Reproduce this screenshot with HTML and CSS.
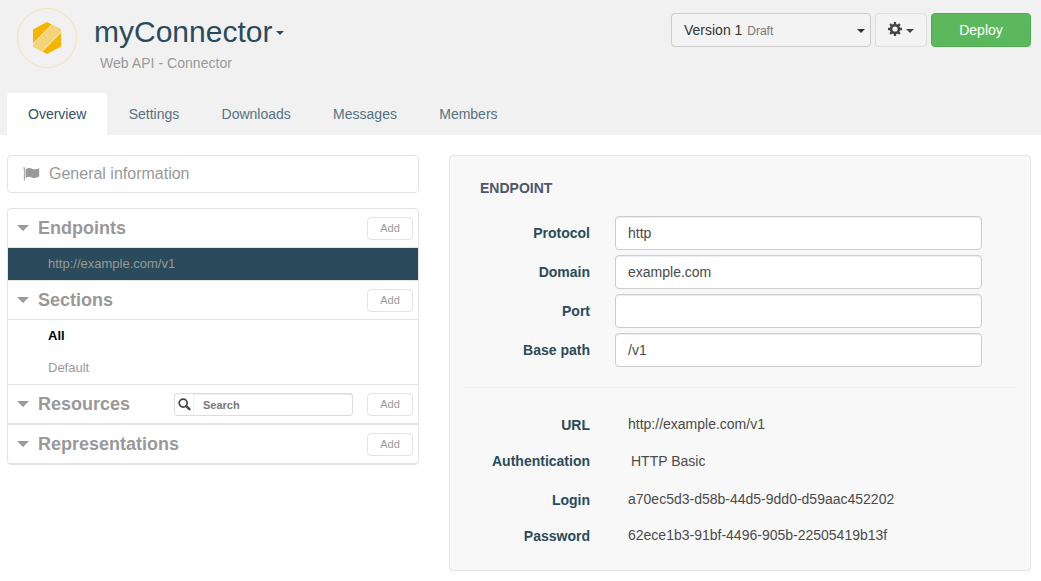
FILE: index.html
```html
<!DOCTYPE html>
<html lang="en">
<head>
<meta charset="utf-8">
<title>myConnector</title>
<link rel="stylesheet" href="styles.css">
</head>
<body>
<header class="header">
  <div class="topbar">
    <svg class="logo" width="60" height="60" viewBox="0 0 60 60">
      <circle cx="30" cy="30" r="29.5" fill="none" stroke="#f3e2b4"/>
      <path d="M30 14 44 21.500V38.500L30 46 16 38.500V21.500Z" fill="#f4b400"/>
      <path d="M35 16.700 44 21.500V24.300L25.200 43.400 16 38.500V36Z" fill="#f3d479"/>
      <path d="M35.300 16.300 15.800 36M44.200 24.200 25 43.600" stroke="#f8f0da" fill="none"/>
    </svg>
    <div class="identity">
      <h1 class="title">myConnector<span class="caret"></span></h1>
      <div class="subtitle">Web API - Connector</div>
    </div>
    <div class="actions">
      <button class="btn version"><span>Version 1 <small>Draft</small></span><span class="caret"></span></button>
      <button class="btn gear">
        <svg width="14" height="14" viewBox="0 0 14 14"><circle cx="7" cy="7" r="3.900" fill="none" stroke="#444" stroke-width="2.600"/><path stroke="#444" stroke-width="2.300" d="M7 0v2.500M7 11.500V14M0 7h2.500M11.500 7H14M2.100 2.100l1.700 1.700M10.200 10.200l1.700 1.700M2.100 11.900l1.700-1.700M10.200 3.800l1.700-1.700"/></svg>
        <span class="caret"></span>
      </button>
      <button class="btn deploy">Deploy</button>
    </div>
  </div>
  <nav class="tabs">
    <a class="tab active">Overview</a><a class="tab">Settings</a><a class="tab">Downloads</a><a class="tab">Messages</a><a class="tab">Members</a>
  </nav>
</header>
<main class="main">
  <aside class="sidebar">
    <div class="general">
      <svg width="17" height="14" viewBox="0 0 17 14" fill="#999"><path d="M.4.2h1.400v13.600H.9V2.100L.4 1.600z"/><path d="M2.600 2.500C5 .9 7 .7 9 1.700c2.100 1 4 .8 7.200-.5v8.400c-3 1.600-5.100 1.700-7.300.8-2.100-.9-4-.7-6.300.6z"/></svg>
      General information
    </div>
    <div class="tree">
      <div class="group"><i class="arrow"></i><h2>Endpoints</h2><button class="add">Add</button></div>
      <div class="item selected">http://example.com/v1</div>
      <div class="group follows"><i class="arrow"></i><h2>Sections</h2><button class="add">Add</button></div>
      <div class="item current">All</div>
      <div class="item">Default</div>
      <div class="group follows"><i class="arrow"></i><h2>Resources</h2>
        <div class="search">
          <span class="search-icon"><svg width="13" height="13" viewBox="0 0 13 13" fill="none" stroke="#444"><circle cx="5.200" cy="5.100" r="4" stroke-width="1.700"/><path d="M8.200 8.100l3.200 3.100" stroke-width="2.300" stroke-linecap="round"/></svg></span>
          <input type="text" placeholder="Search">
        </div>
        <button class="add">Add</button></div>
      <div class="group follows"><i class="arrow"></i><h2>Representations</h2><button class="add">Add</button></div>
    </div>
  </aside>
  <section class="panel">
    <h3 class="panel-title">ENDPOINT</h3>
    <div class="fields">
      <label>Protocol</label><input type="text" value="http">
      <label>Domain</label><input type="text" value="example.com">
      <label>Port</label><input type="text" value="">
      <label>Base path</label><input type="text" value="/v1">
    </div>
    <div class="divider"></div>
    <dl class="facts">
      <dt>URL</dt><dd>http://example.com/v1</dd>
      <dt class="auth-label">Authentication</dt><dd class="auth">HTTP Basic</dd>
      <dt>Login</dt><dd>a70ec5d3-d58b-44d5-9dd0-d59aac452202</dd>
      <dt>Password</dt><dd>62ece1b3-91bf-4496-905b-22505419b13f</dd>
    </dl>
  </section>
</main>
</body>
</html>
```

FILE: styles.css
```css
* { box-sizing: border-box; }
body {
  margin: 0;
  background: #fff;
  color: #4a4a4a;
  font: 14px/20px "Liberation Sans", Arial, sans-serif;
}
h1, h2, h3, dl, dd { margin: 0; }
button, input { font-family: inherit; margin: 0; }

.header {
  height: 135px;
  background: #f1f1f1;
  display: flex;
  flex-direction: column;
  justify-content: space-between;
}
.topbar { display: flex; align-items: flex-start; padding: 8px 10px 0 17px; }
.logo { flex: none; }
.identity { padding-left: 17px; flex: 1; }
.title {
  display: flex;
  align-items: center;
  font-size: 30px;
  font-weight: normal;
  line-height: 34px;
  padding-top: 7px;
  color: #294b5b;
}
.caret {
  width: 0;
  height: 0;
  flex: none;
  border: 4px solid transparent;
  border-top-color: currentColor;
  border-bottom: 0;
}
.title .caret { margin: 2px 0 0 4px; }
.subtitle { padding: 4px 0 0 6px; color: #999; letter-spacing: .04px; }

.actions { display: flex; gap: 4px; padding-top: 5px; }
.btn {
  display: flex;
  align-items: center;
  justify-content: center;
  height: 34px;
  border: 1px solid #ddd;
  border-radius: 4px;
  background: #f3f3f3;
  padding: 0;
  font-size: 14px;
  color: #333;
}
.version { width: 200px; justify-content: space-between; padding: 0 5px 0 12px; border-color: #ccc; }
.version small { margin-left: 1px; font-size: 12px; color: #777; }
.version .caret { margin-top: 2px; }
.gear { width: 52px; gap: 4px; color: #444; }
.gear svg { margin-top: -2px; }
.gear .caret { margin-top: 2px; }
.deploy { width: 100px; background: #5cb85c; border-color: #4cae4c; color: #fff; }

.tabs { display: flex; gap: .3px; padding-left: 7px; }
.tab { height: 42px; padding: 0 21px; line-height: 42px; color: #557282; }
.tab.active { background: #fff; border-radius: 4px 4px 0 0; color: #35505f; }

.main { display: flex; gap: 30px; padding: 20px 10px 0 7px; align-items: flex-start; }
.sidebar { width: 412px; color: #999; }
.general {
  display: flex;
  align-items: center;
  gap: 9px;
  height: 38px;
  padding-left: 15px;
  margin-bottom: 15px;
  border: 1px solid #e3e3e3;
  border-radius: 4px;
  font-size: 16px;
}
.tree { border: 1px solid #e3e3e3; border-radius: 4px; }
.group {
  display: flex;
  align-items: center;
  height: 39px;
  padding: 0 5px 0 9px;
  border-bottom: 1px solid #e3e3e3;
}
.group.follows { height: 40px; border-top: 1px solid #e3e3e3; }
.arrow {
  width: 0;
  border: 6px solid transparent;
  border-top: 6px solid #999;
  border-bottom: 0;
}
.group h2 { flex: 1; padding-left: 9px; font-size: 18px; line-height: 24px; }
.add {
  width: 46px;
  height: 23px;
  padding: 0;
  border: 1px solid #e3e3e3;
  border-radius: 4px;
  background: #fff;
  color: #999;
  font-size: 11px;
}
.item { height: 32px; padding-left: 40px; font-size: 13px; line-height: 32px; }
.selected { background: #294b5b; }
.current { color: #000; font-weight: bold; }
.search {
  display: flex;
  width: 179px;
  height: 23px;
  margin-right: 14px;
  border: 1px solid #ddd;
  border-radius: 3px;
}
.search-icon { width: 18px; padding: 4px 0 0 3px; line-height: 0; }
.search input {
  flex: 1;
  min-width: 0;
  border: 0;
  border-left: 1px solid #f3f3f3;
  padding: 1px 0 0 9px;
  background: transparent;
  box-shadow: inset 0 1px 1px rgba(0, 0, 0, .075);
  font-size: 11px;
  font-weight: bold;
}
.search input::placeholder { color: #777; }

.panel {
  width: 582px;
  height: 416px;
  padding: 22px 15px 0;
  border: 1px solid #e3e3e3;
  border-radius: 4px;
  background: #f8f8f8;
  box-shadow: 0 1px 1px rgba(0, 0, 0, .04);
}
.panel-title { padding-left: 15px; font-size: 14px; line-height: 20px; color: #4c566c; }
.fields {
  display: grid;
  grid-template-columns: 125px 367px;
  column-gap: 25px;
  row-gap: 5px;
  padding-top: 18px;
}
.fields label, .facts dt { text-align: right; font-weight: bold; color: #294b5b; }
.fields label { line-height: 34px; }
.fields input {
  height: 34px;
  padding: 0 12px;
  border: 1px solid #ccc;
  border-radius: 4px;
  background: #fff;
  color: #4a4a4a;
  font-size: 14px;
  box-shadow: inset 0 1px 1px rgba(0, 0, 0, .075);
}
.divider { height: 1px; margin: 20px 0 26px; background: #eee; }
.facts {
  display: grid;
  grid-template-columns: 125px 1fr;
  grid-template-rows: 37px 38px 36px 20px;
  column-gap: 38px;
}
.facts dt { padding-top: 1px; }
.facts .auth-label { padding-top: 0; }
.facts .auth { padding-left: 3px; }
```
